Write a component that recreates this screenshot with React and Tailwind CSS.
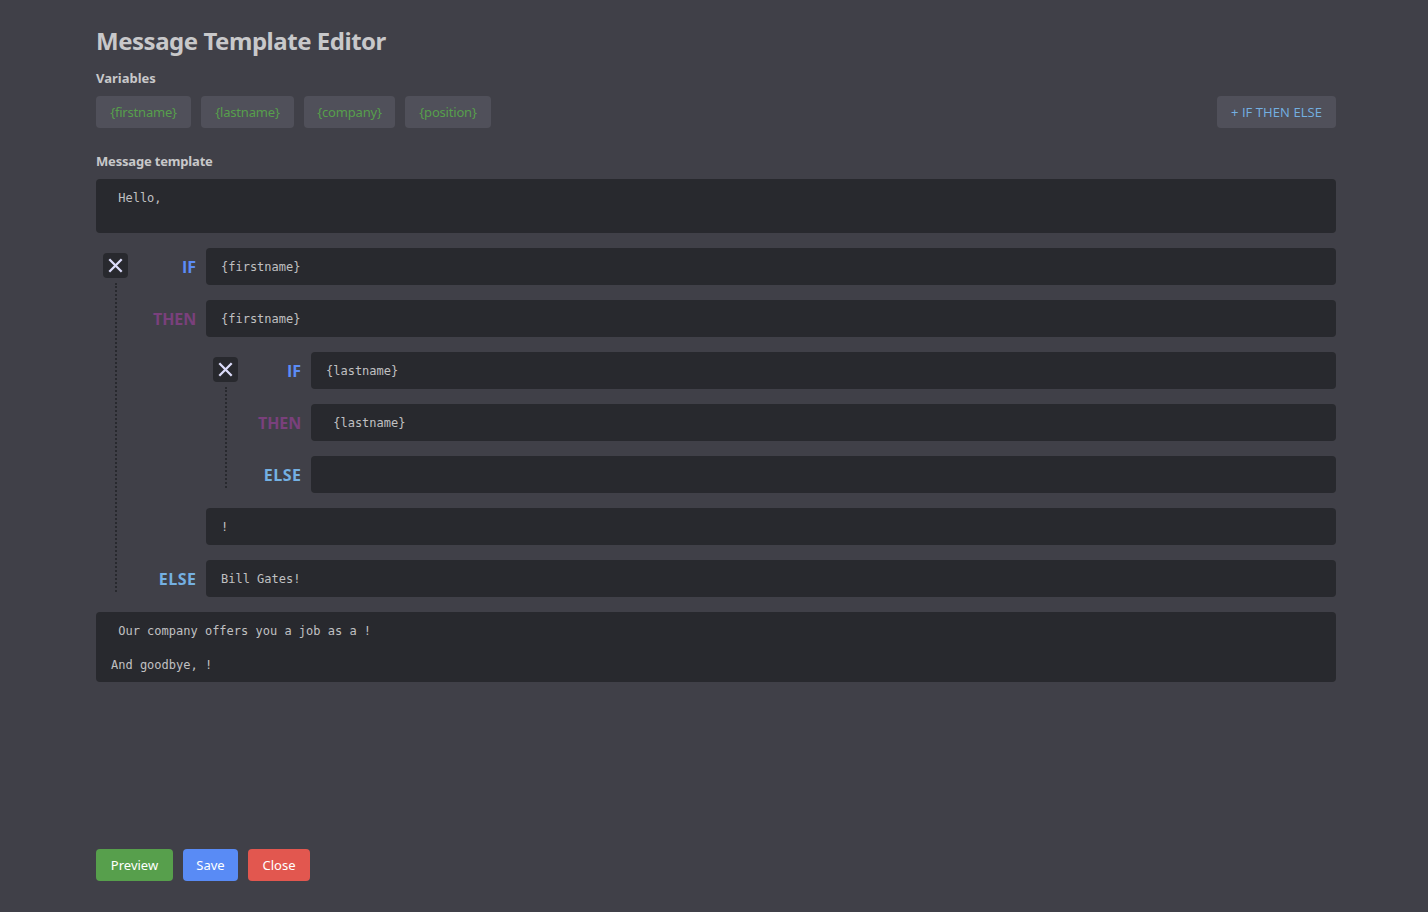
const ui = 'font-["Noto_Sans",sans-serif]';

function Field({ children, className = 'h-[37px]' }) {
  return (
    <div
      className={`${className} min-w-0 flex-1 rounded bg-[#28292e] px-[15px] pt-[11px] pb-[9px] font-["DejaVu_Sans_Mono",monospace] text-[12px] leading-[17px] whitespace-pre text-[#c0c0c2]`}
    >
      {children}
    </div>
  );
}

function Label({ kind, children }) {
  const styles = {
    IF: 'text-[#5c8cf6] tracking-[0px]',
    THEN: 'text-[#7a407c] tracking-[-0.15px]',
    ELSE: 'text-[#74b0e2] tracking-[0.5px] -mr-[0.5px]',
  };
  return <div className={`pr-[10px] text-right font-["Open_Sans",sans-serif] text-[16px] leading-[38px] font-bold ${styles[kind]}`}>{children}</div>;
}

function Row({ kind, labelClass, children }) {
  return (
    <div className="flex h-[37px]">
      <div className={labelClass}>{kind && <Label kind={kind}>{kind}</Label>}</div>
      <Field>{children}</Field>
    </div>
  );
}

function Rail() {
  return (
    <div className="flex w-[25px] shrink-0 flex-col items-center pt-[5px] pb-[5px]">
      <button className="flex size-[25px] shrink-0 items-center justify-center rounded bg-[#28292e]">
        <svg width="25" height="25" viewBox="0 0 25 25" fill="none" stroke="#dcdcfa" strokeWidth="2.3">
          <path d="M6.3 6.3 18.7 18.7M18.7 6.3 6.3 18.7" />
        </svg>
      </button>
      <div className="mt-[5px] ml-px w-0 flex-1 border-l-2 border-dotted border-[#28292e]" />
    </div>
  );
}

const variables = [
  ['{firstname}', 'w-[95px]'],
  ['{lastname}', 'w-[93px]'],
  ['{company}', 'w-[91px]'],
  ['{position}', 'w-[86px]'],
];

const actions = [
  ['Preview', 'w-[77px] bg-[#579f4c]'],
  ['Save', 'w-[55px] bg-[#598bf5]'],
  ['Close', 'w-[62px] bg-[#e2574f]'],
];

export default function App() {
  return (
    <div className={`${ui} flex h-[912px] w-[1428px] flex-col bg-[#404048] pt-[23px] pr-[92px] pb-[31px] pl-[96px] text-[#c8c8ca]`}>
      <h1 className="h-[36px] text-[24px] leading-[36px] font-bold tracking-[-0.47px] whitespace-nowrap">
        Message Template Editor
      </h1>
      <h2 className="mt-[9px] h-[20px] text-[13px] leading-[20px] font-bold tracking-[0px]">Variables</h2>
      <div className="mt-[8px] flex gap-[10px]">
        {variables.map(([name, width]) => (
          <button key={name} className={`${width} h-[32px] rounded bg-[#50505a] text-center text-[13px] leading-[32px] tracking-[-0.2px] whitespace-nowrap text-[#579f4c]`}>
            {name}
          </button>
        ))}
        <button className='ml-auto h-[32px] w-[119px] rounded bg-[#50505a] text-center font-["Open_Sans",sans-serif] text-[13px] leading-[32px] tracking-[0.08px] whitespace-nowrap text-[#74b0e2]'>
          + IF THEN ELSE
        </button>
      </div>
      <h2 className="mt-[23px] h-[20px] text-[13px] leading-[20px] font-bold tracking-[-0.18px]">Message template</h2>

      <div className="mt-[8px] flex flex-col gap-[15px]">
        <div className="flex">
          <Field className="h-[54px]">{' Hello,'}</Field>
        </div>
        <div className="flex pl-[7px]">
          <Rail />
          <div className="flex min-w-0 flex-1 flex-col gap-[15px]">
            <Row kind="IF" labelClass="w-[78px]">{'{firstname}'}</Row>
            <Row kind="THEN" labelClass="w-[78px]">{'{firstname}'}</Row>
            <div className="flex pl-[85px]">
              <Rail />
              <div className="flex min-w-0 flex-1 flex-col gap-[15px]">
                <Row kind="IF" labelClass="w-[73px]">{'{lastname}'}</Row>
                <Row kind="THEN" labelClass="w-[73px]">{' {lastname}'}</Row>
                <Row kind="ELSE" labelClass="w-[73px]" />
              </div>
            </div>
            <Row labelClass="w-[78px]">!</Row>
            <Row kind="ELSE" labelClass="w-[78px]">Bill Gates!</Row>
          </div>
        </div>
        <div className="flex">
          <Field className="h-[70px]">{' Our company offers you a job as a !\n\nAnd goodbye, !'}</Field>
        </div>
      </div>

      <div className="mt-auto flex gap-[10px]">
        {actions.map(([name, look]) => (
          <button key={name} className={`${look} h-[32px] rounded text-center text-[13px] leading-[32px] text-white`}>
            {name}
          </button>
        ))}
      </div>
    </div>
  );
}
